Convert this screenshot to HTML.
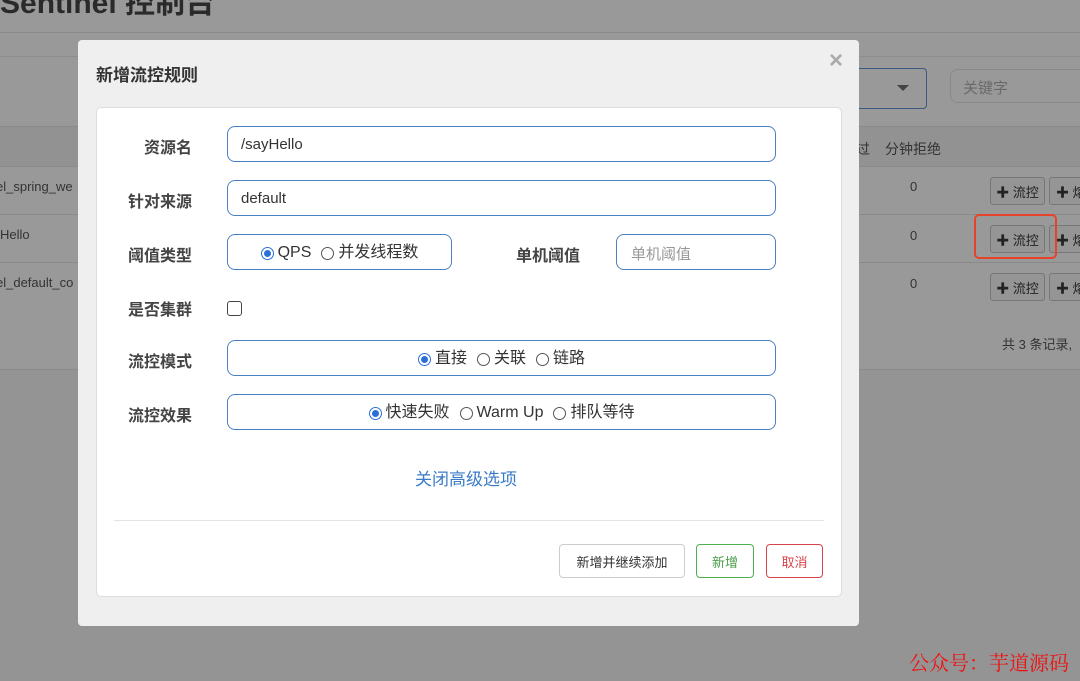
<!DOCTYPE html>
<html><head><meta charset="utf-8"><style>
*{margin:0;padding:0;box-sizing:border-box}
body{width:1080px;height:681px;overflow:hidden;background:#949494;position:relative;font-family:"Liberation Sans","Noto Sans CJK SC",sans-serif;color:#333}
.a{position:absolute}
.bgtxt{color:#333;font-size:13px}
.inp{position:absolute;border:1px solid #4a80c4;border-radius:8px;background:#fff;font-size:15px;color:#333}
.lbl{position:absolute;font-size:16px;font-weight:bold;color:#444;text-align:right;width:80px}
.r{display:inline-block;width:13px;height:13px;border:1px solid #555;border-radius:50%;margin-right:4px;position:relative;background:#fff;flex:none}
.r.on{border:1px solid #2a6fd6;background:#fff}
.r.on::after{content:"";position:absolute;left:2px;top:2px;width:7px;height:7px;border-radius:50%;background:#2a6fd6}
.opts{display:flex;align-items:center;justify-content:center;height:100%;font-size:16px;color:#333;padding-top:2px}
.opts span.o{margin:0 5px;display:flex;align-items:center;height:20px;line-height:20px}
.btn{position:absolute;border-radius:4px;font-size:13px;display:flex;align-items:center;justify-content:center;background:#fff}
.gb{position:absolute;border:1px solid #777;border-radius:3px;font-size:13px;color:#222;display:flex;align-items:center;justify-content:center;background:#959595}
</style></head><body>
<div class="a" style="left:0;top:0;width:1080px;height:370px;background:#999"></div>
<div class="a" style="left:0;top:-22px;font-size:30px;font-weight:bold;color:#2a2a2a">Sentinel 控制台</div>
<div class="a" style="left:0;top:32px;width:1080px;height:1px;background:#8a8a8a"></div>
<div class="a" style="left:0;top:56px;width:1080px;height:1px;background:#8e8e8e"></div>
<div class="a" style="left:0;top:126px;width:1080px;height:41px;background:#929292;border-top:1px solid #8a8a8a;border-bottom:1px solid #8a8a8a"></div>
<div class="a" style="left:0;top:214px;width:1080px;height:1px;background:#8a8a8a"></div>
<div class="a" style="left:0;top:262px;width:1080px;height:1px;background:#8a8a8a"></div>
<div class="a" style="left:0;top:369px;width:1080px;height:1px;background:#8a8a8a"></div>
<div class="a bgtxt" style="left:-4px;top:179px">el_spring_we</div>
<div class="a bgtxt" style="left:0;top:227px">Hello</div>
<div class="a bgtxt" style="left:-4px;top:275px">el_default_co</div>
<div class="a" style="left:820px;top:68px;width:107px;height:41px;border:1px solid #3d5a80;border-radius:4px"></div>
<div class="a" style="left:897px;top:85px;width:0;height:0;border-left:6px solid transparent;border-right:6px solid transparent;border-top:6px solid #444"></div>
<div class="a" style="left:950px;top:69px;width:140px;height:34px;border:1px solid #888;border-radius:8px;font-size:15px;color:#6a6a6a;padding:7px 12px">关键字</div>
<div class="a bgtxt" style="left:856px;top:139px;font-size:14px">过</div>
<div class="a bgtxt" style="left:885px;top:139px;font-size:14px">分钟拒绝</div>
<div class="a bgtxt" style="left:910px;top:179px">0</div>
<div class="a bgtxt" style="left:910px;top:228px">0</div>
<div class="a bgtxt" style="left:910px;top:276px">0</div>
<div class="gb" style="left:990px;top:177px;width:55px;height:28px">✚ 流控</div>
<div class="gb" style="left:1049px;top:177px;width:50px;height:28px;justify-content:flex-start;padding-left:6px">✚ 熔</div>
<div class="gb" style="left:990px;top:225px;width:55px;height:28px">✚ 流控</div>
<div class="gb" style="left:1049px;top:225px;width:50px;height:28px;justify-content:flex-start;padding-left:6px">✚ 熔</div>
<div class="gb" style="left:990px;top:273px;width:55px;height:28px">✚ 流控</div>
<div class="gb" style="left:1049px;top:273px;width:50px;height:28px;justify-content:flex-start;padding-left:6px">✚ 熔</div>
<div class="a" style="left:974px;top:214px;width:83px;height:45px;border:2px solid #e8432a;border-radius:5px"></div>
<div class="a bgtxt" style="left:1002px;top:334px">共 3 条记录,</div>
<div class="a" style="left:909px;top:647px;font-size:20px;color:#f01010;font-family:'Noto Serif CJK SC',serif">公众号：芋道源码</div>

<div class="a" style="left:78px;top:40px;width:781px;height:586px;background:#efefef;border-radius:4px"></div>
<div class="a" style="left:96px;top:61px;font-size:17px;font-weight:bold;color:#333">新增流控规则</div>
<div class="a" style="left:829px;top:47px;font-size:24px;color:#aaa;font-weight:bold">×</div>
<div class="a" style="left:96px;top:107px;width:746px;height:490px;background:#fff;border:1px solid #ddd;border-radius:5px"></div>

<div class="lbl" style="left:112px;top:134px">资源名</div>
<div class="inp" style="left:227px;top:126px;width:549px;height:36px;padding:9px 13px">/sayHello</div>
<div class="lbl" style="left:112px;top:188px">针对来源</div>
<div class="inp" style="left:227px;top:180px;width:549px;height:36px;padding:9px 13px">default</div>
<div class="lbl" style="left:112px;top:242px">阈值类型</div>
<div class="inp" style="left:227px;top:234px;width:225px;height:36px"><div class="opts"><span class="o"><i class="r on"></i>QPS</span><span class="o"><i class="r"></i>并发线程数</span></div></div>
<div class="lbl" style="left:500px;top:242px">单机阈值</div>
<div class="inp" style="left:616px;top:234px;width:160px;height:36px;padding:8px 14px;color:#999">单机阈值</div>
<div class="lbl" style="left:112px;top:296px">是否集群</div>
<div class="a" style="left:227px;top:301px;width:15px;height:15px;border:1px solid #444;border-radius:3px"></div>
<div class="lbl" style="left:112px;top:348px">流控模式</div>
<div class="inp" style="left:227px;top:340px;width:549px;height:36px"><div class="opts"><span class="o"><i class="r on"></i>直接</span><span class="o"><i class="r"></i>关联</span><span class="o"><i class="r"></i>链路</span></div></div>
<div class="lbl" style="left:112px;top:402px">流控效果</div>
<div class="inp" style="left:227px;top:394px;width:549px;height:36px"><div class="opts"><span class="o"><i class="r on"></i>快速失败</span><span class="o"><i class="r"></i>Warm Up</span><span class="o"><i class="r"></i>排队等待</span></div></div>
<div class="a" style="left:415px;top:465px;font-size:17px;color:#3a7bc8">关闭高级选项</div>
<div class="a" style="left:114px;top:520px;width:710px;height:1px;background:#e3e3e3"></div>
<div class="btn" style="left:559px;top:544px;width:126px;height:34px;border:1px solid #ccc;color:#333">新增并继续添加</div>
<div class="btn" style="left:696px;top:544px;width:58px;height:34px;border:1px solid #4caf50;color:#4a9e4a">新增</div>
<div class="btn" style="left:766px;top:544px;width:57px;height:34px;border:1px solid #d9434b;color:#d9434b">取消</div>
</body></html>
